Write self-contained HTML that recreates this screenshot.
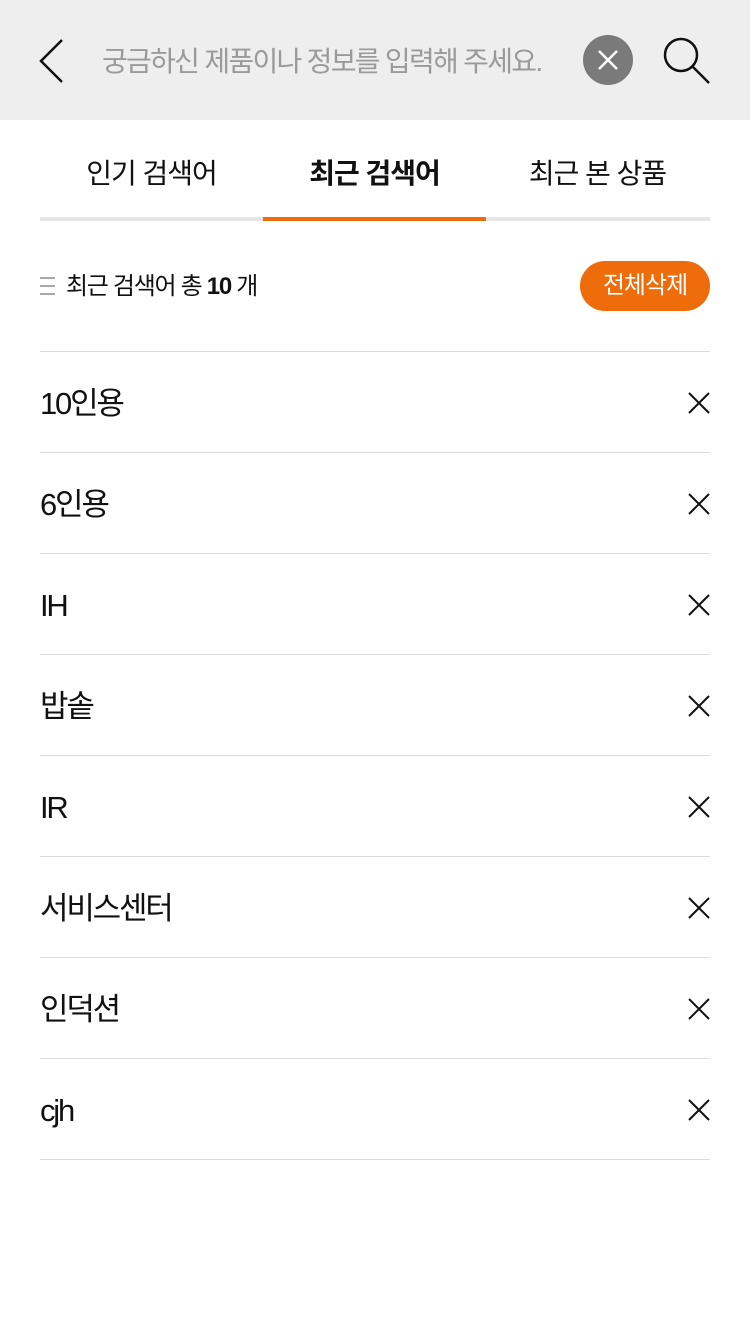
<!DOCTYPE html>
<html><head><meta charset="utf-8"><style>
*{margin:0;padding:0;box-sizing:border-box}
body{width:750px;height:1334px;background:#fff;font-family:"Liberation Sans","Noto Sans CJK KR",sans-serif;position:relative;overflow:hidden;color:#111}
.hdr{position:absolute;left:0;top:0;width:750px;height:120px;background:#eeeeee}
.ph{position:absolute;left:102px;top:40px;font-size:28px;color:#9a9a9a;letter-spacing:-1.7px;line-height:44px}
.clr{position:absolute;left:583px;top:35px;width:50px;height:50px;border-radius:50%;background:#7a7a7a}
.tab{position:absolute;top:152px;font-size:28px;line-height:44px;letter-spacing:-1px;text-align:center;width:223px}
.bar{position:absolute;left:40px;top:217px;width:670px;height:4px;background:#e5e5e5}
.bar i{position:absolute;left:223px;top:0;width:223px;height:4px;background:#ee6d0a}
.cnt{position:absolute;left:66px;top:267px;font-size:24px;line-height:40px;letter-spacing:-1.3px}
.btn{position:absolute;left:580px;top:261px;width:130px;height:50px;border-radius:25px;background:#ee6d0a;color:#fff;font-size:24px;line-height:50px;text-align:center;letter-spacing:-1px}
.row{position:absolute;left:40px;width:670px;height:101px;border-top:1px solid #dcdcdc}
.row span{position:absolute;left:0;top:30px;font-size:31px;line-height:44px;letter-spacing:-2.2px}
.row svg{position:absolute;right:0;top:40px}
</style></head><body>
<div class="hdr">
<svg style="position:absolute;left:38px;top:38px" width="28" height="46"><path d="M24 2 L3 23 L24 44" stroke="#111" stroke-width="2.5" fill="none"/></svg>
<div class="ph">궁금하신 제품이나 정보를 입력해 주세요.</div>
<div class="clr"><svg width="50" height="50"><path d="M16 16L34 34M34 16L16 34" stroke="#fff" stroke-width="2.5"/></svg></div>
<svg style="position:absolute;left:662px;top:36px" width="50" height="50"><circle cx="19" cy="19" r="16" stroke="#111" stroke-width="2.5" fill="none"/><path d="M30 30L47 47" stroke="#111" stroke-width="2.5"/></svg>
</div>
<div class="tab" style="left:40px">인기 검색어</div>
<div class="tab" style="left:263px;font-weight:bold">최근 검색어</div>
<div class="tab" style="left:486px">최근 본 상품</div>
<div class="bar"><i></i></div>
<svg style="position:absolute;left:40px;top:277px" width="16" height="20"><path d="M0 1H15M0 9H15M0 17H15" stroke="#aaa" stroke-width="2"/></svg>
<div class="cnt">최근 검색어 총 <b>10</b> 개</div>
<div class="btn">전체삭제</div>
<div class="row" style="top:351px"><span>10인용</span><svg width="22" height="22"><path d="M1 1L21 21M21 1L1 21" stroke="#111" stroke-width="2"/></svg></div>
<div class="row" style="top:452px"><span>6인용</span><svg width="22" height="22"><path d="M1 1L21 21M21 1L1 21" stroke="#111" stroke-width="2"/></svg></div>
<div class="row" style="top:553px"><span>IH</span><svg width="22" height="22"><path d="M1 1L21 21M21 1L1 21" stroke="#111" stroke-width="2"/></svg></div>
<div class="row" style="top:654px"><span>밥솥</span><svg width="22" height="22"><path d="M1 1L21 21M21 1L1 21" stroke="#111" stroke-width="2"/></svg></div>
<div class="row" style="top:755px"><span>IR</span><svg width="22" height="22"><path d="M1 1L21 21M21 1L1 21" stroke="#111" stroke-width="2"/></svg></div>
<div class="row" style="top:856px"><span>서비스센터</span><svg width="22" height="22"><path d="M1 1L21 21M21 1L1 21" stroke="#111" stroke-width="2"/></svg></div>
<div class="row" style="top:957px"><span>인덕션</span><svg width="22" height="22"><path d="M1 1L21 21M21 1L1 21" stroke="#111" stroke-width="2"/></svg></div>
<div class="row" style="top:1058px"><span>cjh</span><svg width="22" height="22"><path d="M1 1L21 21M21 1L1 21" stroke="#111" stroke-width="2"/></svg></div>
<div class="row" style="top:1159px;height:1px"></div>
</body></html>
